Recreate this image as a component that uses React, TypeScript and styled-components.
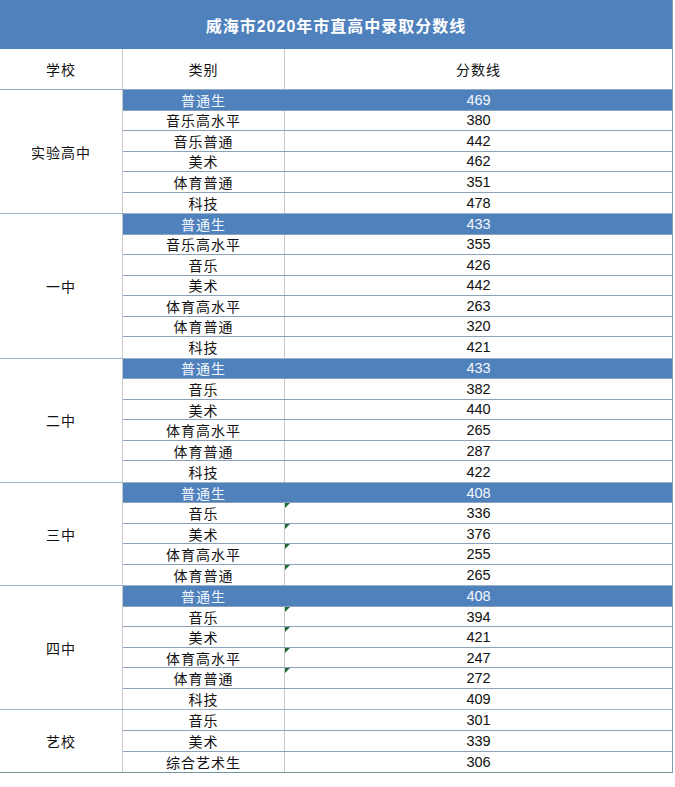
import React from 'react';
import styled, { createGlobalStyle } from 'styled-components';

const GlobalStyle = createGlobalStyle`
    * {
        box-sizing: border-box;
    }
    body {
        margin: 0;
        background: #ffffff;
        font-family: "Liberation Sans", "Noto Sans CJK SC", sans-serif;
    }
`;

const BLUE = '#4f81bd';
const ROW_H = 20.52;

type Item = { name: string; score: string; mark?: boolean };
type Group = { school: string; items: Item[] };

const groups: Group[] = [
    {
        school: '实验高中',
        items: [
            { name: '普通生', score: '469' },
            { name: '音乐高水平', score: '380' },
            { name: '音乐普通', score: '442' },
            { name: '美术', score: '462' },
            { name: '体育普通', score: '351' },
            { name: '科技', score: '478' },
        ],
    },
    {
        school: '一中',
        items: [
            { name: '普通生', score: '433' },
            { name: '音乐高水平', score: '355' },
            { name: '音乐', score: '426' },
            { name: '美术', score: '442' },
            { name: '体育高水平', score: '263' },
            { name: '体育普通', score: '320' },
            { name: '科技', score: '421' },
        ],
    },
    {
        school: '二中',
        items: [
            { name: '普通生', score: '433' },
            { name: '音乐', score: '382' },
            { name: '美术', score: '440' },
            { name: '体育高水平', score: '265' },
            { name: '体育普通', score: '287' },
            { name: '科技', score: '422' },
        ],
    },
    {
        school: '三中',
        items: [
            { name: '普通生', score: '408' },
            { name: '音乐', score: '336', mark: true },
            { name: '美术', score: '376', mark: true },
            { name: '体育高水平', score: '255', mark: true },
            { name: '体育普通', score: '265', mark: true },
        ],
    },
    {
        school: '四中',
        items: [
            { name: '普通生', score: '408' },
            { name: '音乐', score: '394', mark: true },
            { name: '美术', score: '421', mark: true },
            { name: '体育高水平', score: '247', mark: true },
            { name: '体育普通', score: '272', mark: true },
            { name: '科技', score: '409' },
        ],
    },
    {
        school: '艺校',
        items: [
            { name: '音乐', score: '301' },
            { name: '美术', score: '339' },
            { name: '综合艺术生', score: '306' },
        ],
    },
];

const Sheet = styled.div`
    width: 673px;
    display: flex;
    flex-direction: column;
    border-right: 1px solid #7f9fb8;
`;

const TitleBar = styled.div`
    height: 49px;
    background: ${BLUE};
    color: #ffffff;
    display: flex;
    align-items: center;
    justify-content: center;
    font-size: 16px;
    font-weight: bold;
    letter-spacing: 1px;
`;

const HeaderRow = styled.div`
    height: 41px;
    display: flex;
    border-bottom: 1px solid #93abc4;
`;

const HeadCell = styled.div<{ $w?: number }>`
    ${({ $w }) => ($w ? `width: ${$w}px;` : 'flex: 1;')}
    display: flex;
    align-items: center;
    justify-content: center;
    font-size: 14px;
    letter-spacing: 1px;
    color: #111111;
    border-right: 1px solid #c8c8c8;
    &:last-child {
        border-right: none;
    }
`;

const GroupBlock = styled.div<{ $last?: boolean }>`
    display: flex;
    border-bottom: ${({ $last }) => ($last ? '1px solid #6f9a9c' : '1px solid #9db3c8')};
`;

const SchoolCell = styled.div`
    width: 123px;
    display: flex;
    align-items: center;
    justify-content: center;
    font-size: 14px;
    letter-spacing: 1px;
    color: #111111;
    border-right: 1px solid #c8c8c8;
`;

const Rows = styled.div`
    flex: 1;
    display: flex;
    flex-direction: column;
`;

const Row = styled.div<{ $highlight?: boolean }>`
    height: ${ROW_H}px;
    display: flex;
    background: ${({ $highlight }) => ($highlight ? BLUE : '#ffffff')};
    color: ${({ $highlight }) => ($highlight ? '#f4f8fc' : '#111111')};
    border-bottom: 1px solid #8ba2ba;
    &:last-child {
        border-bottom: none;
    }
`;

const CategoryCell = styled.div<{ $highlight?: boolean }>`
    width: 162px;
    display: flex;
    align-items: center;
    justify-content: center;
    font-size: 14px;
    letter-spacing: 1px;
    border-right: 1px solid ${({ $highlight }) => ($highlight ? BLUE : '#c8c8c8')};
`;

const ScoreCell = styled.div<{ $mark?: boolean }>`
    flex: 1;
    position: relative;
    display: flex;
    align-items: center;
    justify-content: center;
    font-size: 14.5px;

    ${({ $mark }) =>
        $mark &&
        `&::before {
            content: '';
            position: absolute;
            left: 0;
            top: 0;
            border-top: 5px solid #1f6b3a;
            border-right: 5px solid transparent;
        }`}
`;

const App: React.FC = () => {
    return (
        <>
            <GlobalStyle />
            <Sheet>
                <TitleBar>威海市2020年市直高中录取分数线</TitleBar>
                <HeaderRow>
                    <HeadCell $w={123}>学校</HeadCell>
                    <HeadCell $w={162}>类别</HeadCell>
                    <HeadCell>分数线</HeadCell>
                </HeaderRow>
                {groups.map((g, gi) => (
                    <GroupBlock key={g.school} $last={gi === groups.length - 1}>
                        <SchoolCell>{g.school}</SchoolCell>
                        <Rows>
                            {g.items.map((it, i) => {
                                const hl = it.name === '普通生';
                                return (
                                    <Row key={i} $highlight={hl}>
                                        <CategoryCell $highlight={hl}>{it.name}</CategoryCell>
                                        <ScoreCell $mark={it.mark}>{it.score}</ScoreCell>
                                    </Row>
                                );
                            })}
                        </Rows>
                    </GroupBlock>
                ))}
            </Sheet>
        </>
    );
};

export default App;
